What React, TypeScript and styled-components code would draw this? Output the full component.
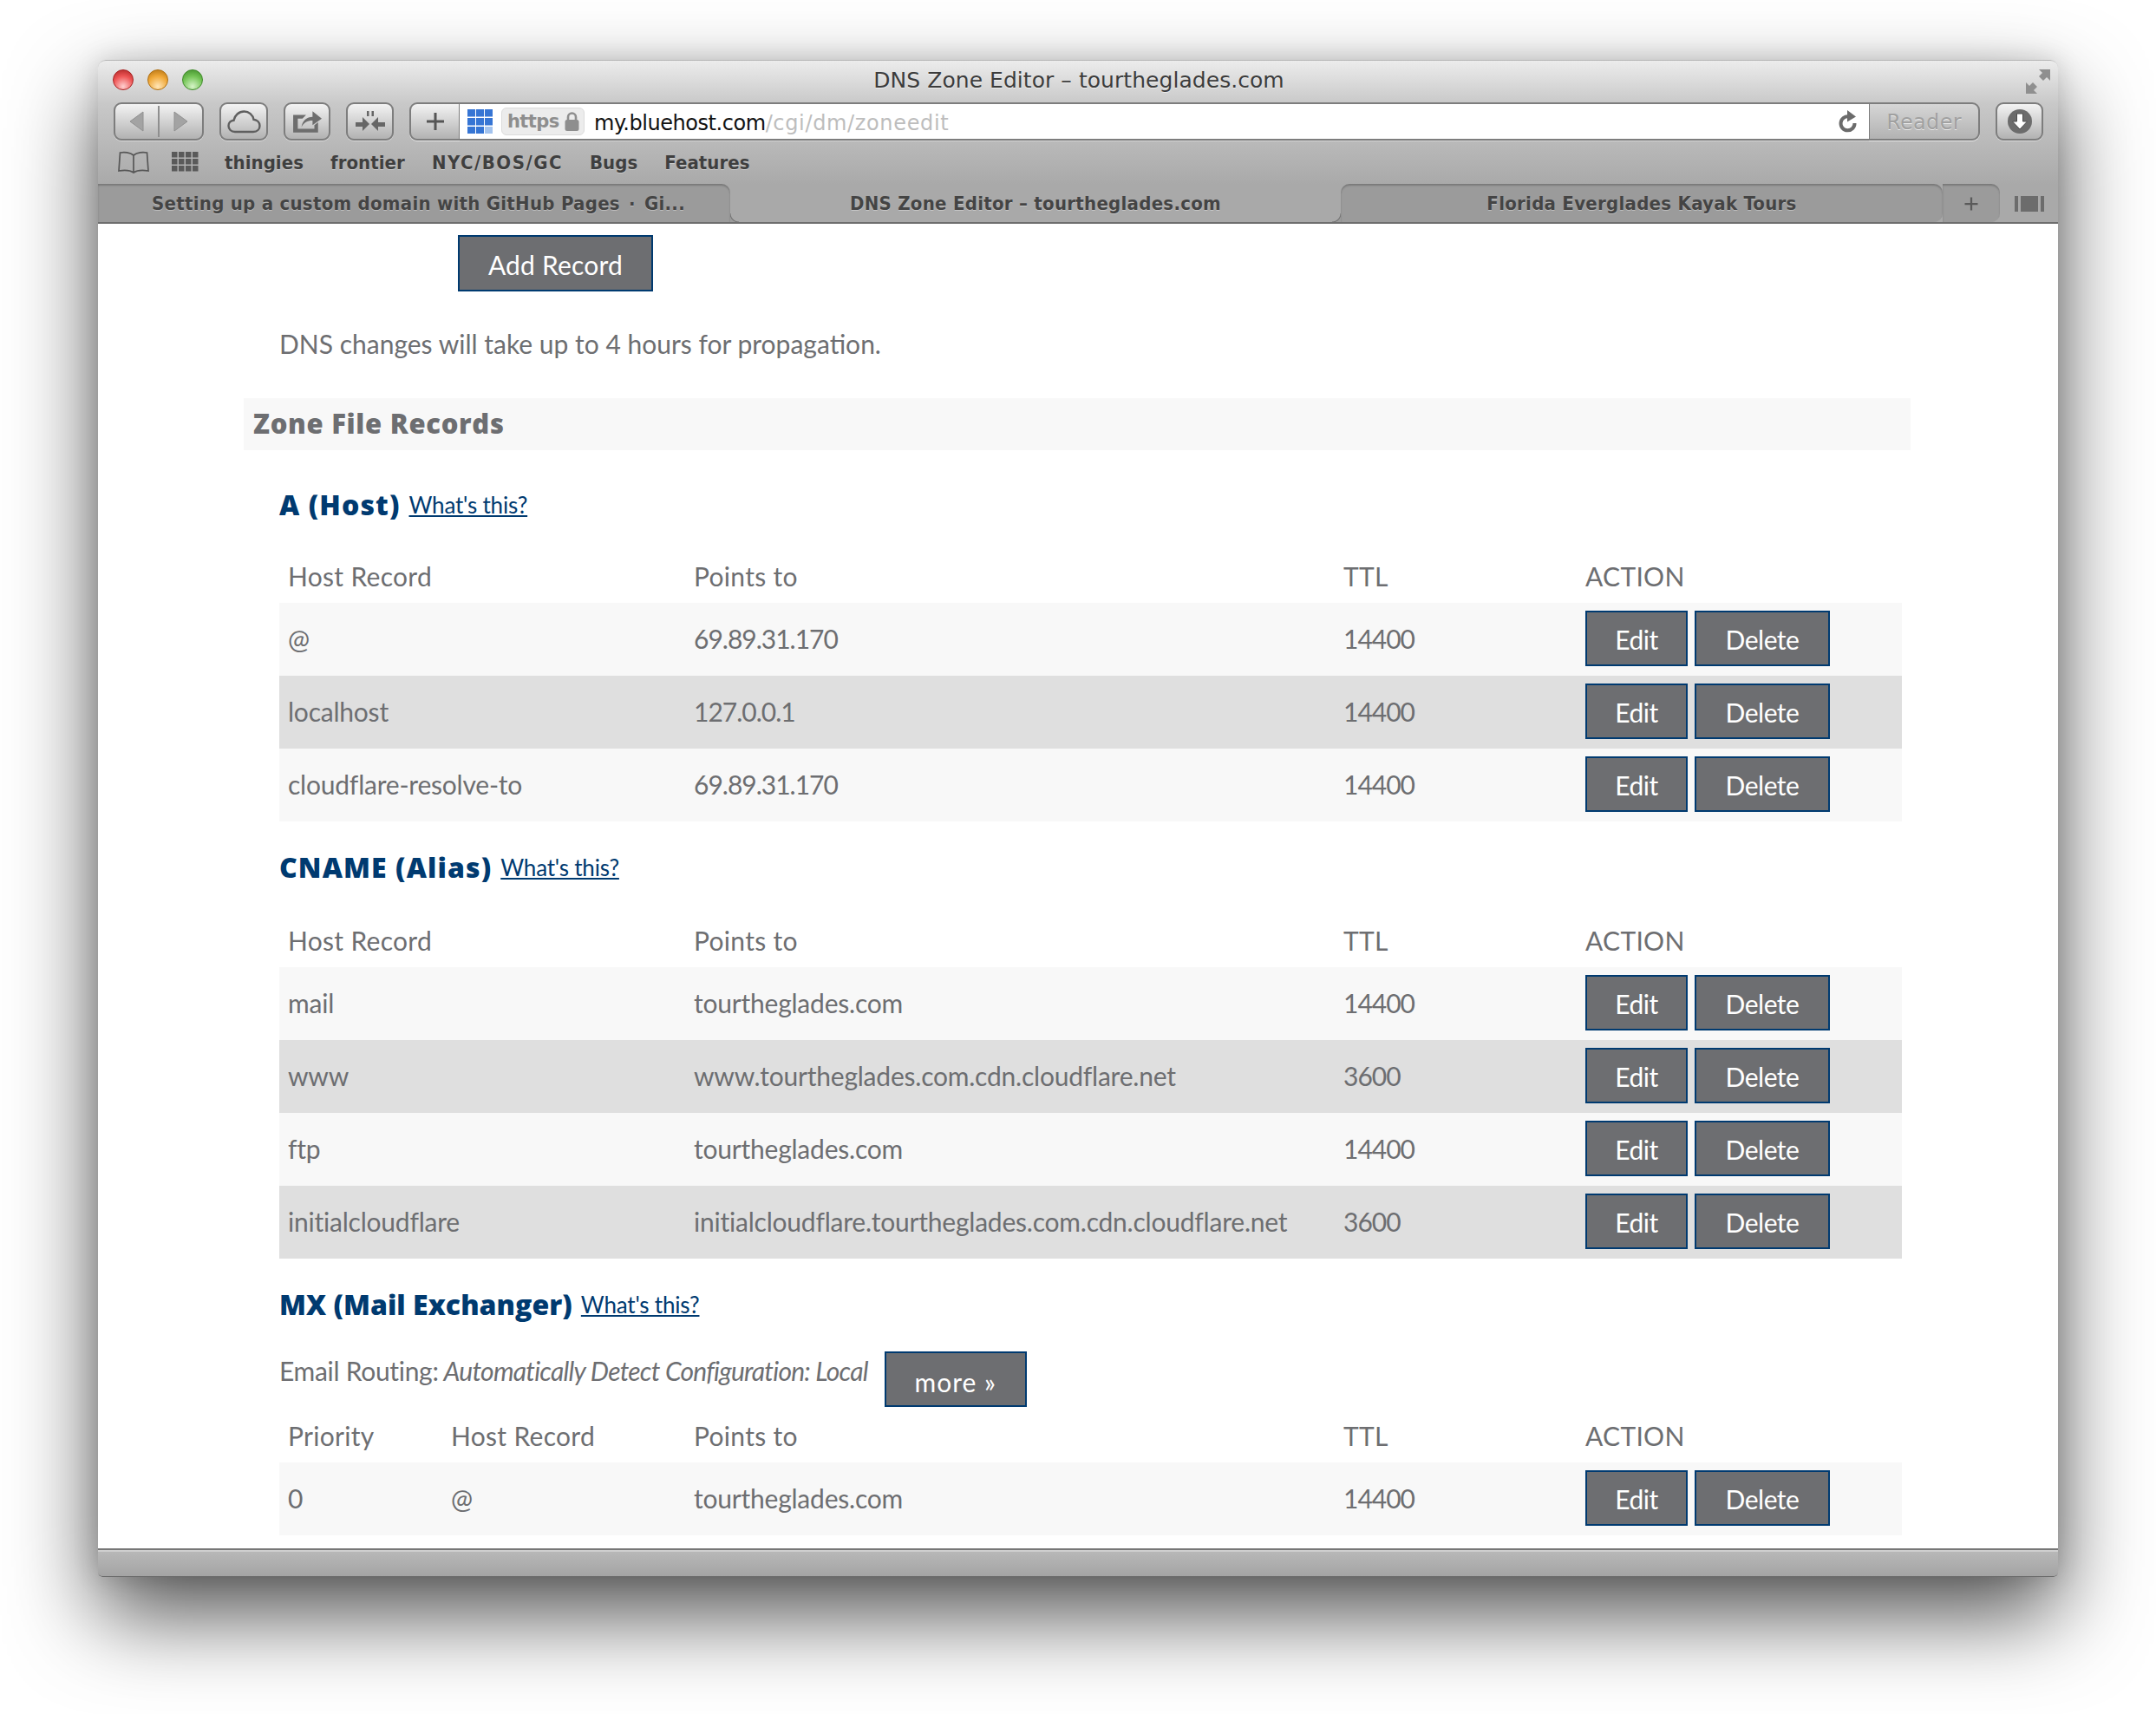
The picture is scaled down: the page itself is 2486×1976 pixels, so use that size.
import React from "react"
import styled, { createGlobalStyle } from "styled-components"

const chromeFont = `"DejaVu Sans", "Liberation Sans", sans-serif`
const pageFont = `Lato, "Open Sans", sans-serif`
const headingFont = `"Open Sans", Lato, sans-serif`
const navy = "#003a70"
const slate = "#6d6e71"

const GlobalStyle = createGlobalStyle`
	html, body {
		margin: 0;
		background: #fff;
	}
	* {
		box-sizing: border-box;
	}
`

const Stage = styled.div`
	width: 2486px;
	height: 1976px;
	padding: 69px 113px 0;
	overflow: hidden;
	background: #fff;
`

const Window = styled.div`
	width: 2260px;
	height: 1749px;
	display: flex;
	flex-direction: column;
	border-radius: 9px 9px 5px 5px;
	box-shadow: 0 44px 100px rgba(0, 0, 0, 0.68), 0 0 30px rgba(0, 0, 0, 0.14);
`

const Chrome = styled.div`
	background: linear-gradient(#ececec 0, #c8c8c8 50px, #b4b4b4 110px, #a9a9a9 143px);
	border-radius: 9px 9px 0 0;
	border-top: 1px solid #b5b5b5;
`

const TitleBar = styled.div`
	height: 48px;
	display: flex;
	align-items: center;
	padding: 0 9px 0 17px;
`

const Lights = styled.div`
	display: flex;
	gap: 16px;
	margin-top: -4px;
`

const Light = styled.span<{ $hue: string; $glow: string; $rim: string }>`
	width: 24px;
	height: 24px;
	border-radius: 50%;
	border: 1px solid ${(p) => p.$rim};
	background: radial-gradient(circle at 50% 85%, ${(p) => p.$glow} 0, ${(p) => p.$hue} 55%, ${(p) => p.$rim} 100%);
`

const Title = styled.div`
	flex: 1;
	text-align: center;
	font: 400 25px ${chromeFont};
	letter-spacing: 0.05px;
	color: #3c3c3c;
	padding-right: 82px;
	margin-top: -3px;
	text-shadow: 0 1px 0 rgba(255, 255, 255, 0.6);
`

const Toolbar = styled.div`
	height: 44px;
	display: flex;
	padding: 0 17px 0 18px;
	gap: 18px;
`

const ToolButton = styled.div<{ $w: number }>`
	width: ${(p) => p.$w}px;
	height: 44px;
	display: flex;
	align-items: center;
	justify-content: center;
	border: 2px solid #7d7d7d;
	border-radius: 9px;
	background: linear-gradient(#f3f3f3, #b2b2b2);
	box-shadow: 0 1px 0 rgba(255, 255, 255, 0.45);
`

const NavSplit = styled.span`
	width: 2px;
	height: 36px;
	margin: 0 16px;
	background: #8f8f8f;
`

const AddressGroup = styled.div`
	flex: 1;
	display: flex;
	height: 44px;
	box-shadow: 0 1px 0 rgba(255, 255, 255, 0.4);
	border-radius: 9px;
`

const AddTab = styled(ToolButton)`
	border-radius: 9px 0 0 9px;
	border-right-width: 1px;
`

const AddressField = styled.div`
	flex: 1;
	display: flex;
	align-items: center;
	padding: 0 14px 0 9px;
	background: #fff;
	border-top: 2px solid #7d7d7d;
	border-bottom: 2px solid #7d7d7d;
`

const Secure = styled.div`
	height: 32px;
	width: 96px;
	margin: 0 11px 0 10px;
	display: flex;
	align-items: center;
	gap: 6px;
	padding-left: 6px;
	font: 700 21px ${chromeFont};
	letter-spacing: -0.6px;
	color: #8e8e8e;
	background: #ececec;
	border: 1px solid #dcdcdc;
	border-radius: 6px;
`

const UrlText = styled.div`
	flex: 1;
	padding-top: 4px;
	font: 400 24px ${chromeFont};
	letter-spacing: -0.45px;
	color: #111;
	white-space: nowrap;
`

const UrlPath = styled.span`
	color: #bdbdbd;
	letter-spacing: 0.65px;
`

const ReaderButton = styled(ToolButton)`
	padding-top: 2px;
	border-radius: 0 9px 9px 0;
	border-left-width: 1px;
	font: 400 24px ${chromeFont};
	letter-spacing: 0.3px;
	color: #a0a0a0;
	background: linear-gradient(#d6d6d6, #b2b2b2);
	text-shadow: 0 1px 0 rgba(255, 255, 255, 0.7);
`

const Bookmarks = styled.div`
	height: 50px;
	display: flex;
	align-items: center;
	padding-left: 23px;
`

const BookmarkIcons = styled.div`
	display: flex;
	align-items: center;
	gap: 26px;
	margin-right: 30px;
`

const BookmarkList = styled.div`
	display: flex;
	gap: 31px;
`

const Bookmark = styled.span<{ $track?: number }>`
	font: 700 22px ${chromeFont};
	font-stretch: condensed;
	letter-spacing: ${(p) => p.$track ?? 0.05}px;
	color: #3f3f3f;
	text-shadow: 0 1px 0 rgba(255, 255, 255, 0.35);
`

const TabBar = styled.div`
	height: 46px;
	display: grid;
	grid-template-columns: 729px 704px 694px 66px 67px;
	background: #a9a9a9;
	border-bottom: 2px solid #6e6e6e;
`

const Tab = styled.div<{ $active?: boolean; $flat?: boolean; $corners?: string; $inset?: number }>`
	position: relative;
	display: flex;
	align-items: center;
	justify-content: center;
	padding: 1px 0 0 ${(p) => p.$inset ?? 0}px;
	font: 700 22px ${chromeFont};
	font-stretch: condensed;
	letter-spacing: 0.27px;
	color: #444;
	text-shadow: 0 1px 0 rgba(255, 255, 255, 0.35);
	white-space: pre;
	border-radius: ${(p) => p.$corners ?? "0"};
	background: ${(p) => (p.$active || p.$flat ? "transparent" : "#9b9b9b")};
	box-shadow: ${(p) => (p.$active || p.$flat ? "none" : "inset 0 2px 2px rgba(0, 0, 0, 0.22)")};
	&::before,
	&::after {
		display: ${(p) => (p.$active ? "block" : "none")};
		content: "";
		position: absolute;
		bottom: 0;
		width: 10px;
		height: 10px;
	}
	&::before {
		left: 0;
		background: radial-gradient(circle at 100% 0, transparent 9px, #6f6f6f 10px, #9b9b9b 11px);
	}
	&::after {
		right: 0;
		background: radial-gradient(circle at 0 0, transparent 9px, #6f6f6f 10px, #9b9b9b 11px);
	}
`

const Viewport = styled.div`
	height: 1528px;
	overflow: hidden;
	background: #fff;
	padding: 13px 0 0 168px;
	font: 400 30px ${pageFont};
	color: ${slate};
`

const PageButton = styled.button<{ $w: number }>`
	width: ${(p) => p.$w}px;
	height: 64px;
	padding: 1px 0 0;
	border: 2px solid ${navy};
	background: ${slate};
	color: #fff;
	font: 400 30px ${pageFont};
	letter-spacing: -0.5px;
`

const AddRecord = styled(PageButton)`
	margin-left: 247px;
	display: block;
	height: 65px;
	padding-top: 3px;
	letter-spacing: 0.2px;
`

const Notice = styled.p`
	margin: 37px 0 0 41px;
	height: 47px;
	line-height: 47px;
`

const ZoneBar = styled.div`
	width: 1922px;
	height: 60px;
	margin-top: 39px;
	padding-left: 11px;
	font: 800 31px/58px ${headingFont};
	letter-spacing: 0.7px;
	background: #f8f8f8;
`

const Section = styled.section<{ $first?: boolean }>`
	margin: ${(p) => (p.$first ? "32px" : "22px")} 0 0 41px;
	width: 1871px;
`

const Heading = styled.div`
	height: 60px;
	display: flex;
	align-items: center;
	gap: 10px;
`

const HeadingText = styled.h2<{ $track: number }>`
	margin: 0;
	font: 800 32px ${headingFont};
	letter-spacing: ${(p) => p.$track}px;
	color: ${navy};
`

const Help = styled.a`
	font-size: 26px;
	color: ${navy};
	text-decoration: underline;
	letter-spacing: -0.2px;
	padding-top: 2px;
`

const Routing = styled.div`
	display: flex;
	gap: 19px;
	margin-top: 25px;
	height: 64px;
`

const RoutingText = styled.div`
	height: 44px;
	line-height: 44px;
	letter-spacing: -0.3px;
	em {
		margin-left: 6px;
		letter-spacing: -0.75px;
	}
`

const MoreButton = styled(PageButton)`
	padding-top: 6px;
	letter-spacing: 1px;
`

const Table = styled.table<{ $top: number }>`
	width: 1871px;
	margin-top: ${(p) => p.$top}px;
	border-collapse: collapse;
	table-layout: fixed;
`

const Col = styled.col<{ $w: number }>`
	width: ${(p) => p.$w}px;
`

const HeadCell = styled.th`
	height: 62px;
	padding: 0 0 0 10px;
	text-align: left;
	font-weight: 400;
	letter-spacing: 0.3px;
`

const Row = styled.tr`
	background: #f8f8f8;
	&:nth-child(even) {
		background: #dfdfdf;
	}
`

const Cell = styled.td<{ $tight?: boolean }>`
	height: 84px;
	padding: 0 0 2px 10px;
	letter-spacing: ${(p) => (p.$tight ? "-1px" : "-0.22px")};
	white-space: nowrap;
`

const Actions = styled.div`
	display: flex;
	gap: 8px;
`

const StatusBar = styled.div`
	height: 33px;
	background: linear-gradient(#b9b9b9, #a4a4a4);
	border-top: 2px solid #777;
	border-bottom: 1px solid #6c6c6c;
	border-radius: 0 0 5px 5px;
	box-shadow: inset 0 2px 0 #cfcfcf;
`

const ExpandIcon = () => (
	<svg width="28" height="28" viewBox="0 0 28 28">
		<path fill="#8f8f8f" d="M15 0H28V13L24 9 20 13 15 8 19 4ZM13 28H0V15L4 19 8 15 13 20 9 24Z" />
	</svg>
)

const BackIcon = ({ flip }: { flip?: boolean }) => (
	<svg width="17" height="24" viewBox="0 0 17 24">
		<path fill="#a3a3a3" stroke="#909090" d={flip ? "M1 1l15 11L1 23z" : "M16 1L1 12l15 11z"} />
	</svg>
)

const CloudIcon = () => (
	<svg width="39" height="27" viewBox="0 0 39 27">
		<path
			fill="none"
			stroke="#5f5f5f"
			strokeWidth="2.4"
			d="M9 25C4.5 25 1.5 22 1.5 18 1.5 14.500 4 12 7.500 11.800 8.500 6 13.500 1.500 19.500 1.500 25 1.500 29.500 5.500 30.500 10.800 34.500 11.300 37.500 14 37.500 18 37.500 22 34.500 25 30 25z"
		/>
	</svg>
)

const ShareIcon = () => (
	<svg width="34" height="28" viewBox="0 0 32 26">
		<path fill="#6d6d6d" d="M1 6h14l-4 4H6v11h18v-4l4-3v11H1z" />
		<path fill="#6d6d6d" d="M10 19c1-7 6-11 12-11V2l10 8-10 7v-5c-6 0-9 2-12 7z" />
	</svg>
)

const CollapseIcon = () => (
	<svg width="34" height="24" viewBox="0 0 34 24">
		<path fill="#666" d="M0 13h8V7l8 8-8 8v-5H0zM34 13h-8V7l-8 8 8 8v-5h8zM13 0h2.500v6H13zM18.500 0H21v6h-2.500z" />
	</svg>
)

const PlusIcon = ({ size = 24, color = "#555" }: { size?: number; color?: string }) => (
	<svg width={size} height={size} viewBox="0 0 24 24">
		<path fill={color} d="M10.500 2h3v8.500H22v3h-8.500V22h-3v-8.500H2v-3h8.500z" />
	</svg>
)

const SitesIcon = () => (
	<svg width="29" height="28" viewBox="0 0 29 28">
		{[0, 1, 2].flatMap((r) =>
			[0, 1, 2].map((c) => (
				<rect
					key={`${r}${c}`}
					x={c * 10}
					y={r * 10}
					width="9"
					height="8.500"
					fill={r === 2 && c === 2 ? "#a3c3ee" : "#3675d4"}
				/>
			)),
		)}
	</svg>
)

const LockIcon = () => (
	<svg width="17" height="24" viewBox="0 0 17 24">
		<path fill="none" stroke="#8e8e8e" strokeWidth="2.600" d="M4 11V7a4.500 4.500 0 0 1 9 0v4" />
		<rect x="0.500" y="10" width="16" height="13" rx="2.500" fill="#8e8e8e" />
	</svg>
)

const ReloadIcon = () => (
	<svg width="22" height="28" viewBox="0 0 22 28">
		<path fill="none" stroke="#6b6b6b" strokeWidth="4" d="M13 8.500A8 8 0 1 0 19.500 16" />
		<path fill="#6b6b6b" d="M11 1l10 7.500-10 6z" />
	</svg>
)

const DownloadIcon = () => (
	<svg width="28" height="28" viewBox="0 0 28 28">
		<circle cx="14" cy="14" r="14" fill="#6c6c6c" />
		<path fill="#fff" stroke="#4d4d4d" d="M10.500 5h7v9h5L14 23l-8.500-9h5z" />
	</svg>
)

const BookIcon = () => (
	<svg width="36" height="26" viewBox="0 0 36 26">
		<path
			fill="none"
			stroke="#575757"
			strokeWidth="1.700"
			d="M18 5C14 1.500 7 1 2.500 2L1 23c6-1 13-.8 17 2 4-2.800 11-3 17-2L33.500 2C29 1 22 1.500 18 5zv20"
		/>
	</svg>
)

const TopSitesIcon = () => (
	<svg width="31" height="24" viewBox="0 0 31 24">
		{[0, 1, 2].flatMap((r) =>
			[0, 1, 2, 3].map((c) => (
				<rect key={`${r}${c}`} x={c * 8} y={r * 8} width="6.500" height="6.500" fill="#5a5a5a" />
			)),
		)}
	</svg>
)

const SidebarIcon = () => (
	<svg width="34" height="18" viewBox="0 0 34 18">
		<path fill="#6c6c6c" d="M0 0h4v18H0zM7 0h20v18H7zM30 0h4v18h-4z" />
	</svg>
)

type DnsRecord = { cells: string[] }

const isNumeric = (text: string) => /^[\d.]+$/.test(text)

const RecordRows = ({ rows }: { rows: DnsRecord[] }) => (
	<tbody>
		{rows.map((row) => (
			<Row key={row.cells.join()}>
				{row.cells.map((cell, i) => (
					<Cell key={i} $tight={isNumeric(cell)}>
						{cell}
					</Cell>
				))}
				<Cell>
					<Actions>
						<PageButton $w={118}>Edit</PageButton>
						<PageButton $w={156}>Delete</PageButton>
					</Actions>
				</Cell>
			</Row>
		))}
	</tbody>
)

const Columns = ({ widths }: { widths: number[] }) => (
	<colgroup>
		{widths.map((w, i) => (
			<Col key={i} $w={w} />
		))}
	</colgroup>
)

const Head = ({ labels }: { labels: string[] }) => (
	<thead>
		<tr>
			{labels.map((label) => (
				<HeadCell key={label}>{label}</HeadCell>
			))}
		</tr>
	</thead>
)

const SectionTitle = ({ children, track }: { children: string; track: number }) => (
	<Heading>
		<HeadingText $track={track}>{children}</HeadingText>
		<Help href="#">What's this?</Help>
	</Heading>
)

const hostRows: DnsRecord[] = [
	{ cells: ["@", "69.89.31.170", "14400"] },
	{ cells: ["localhost", "127.0.0.1", "14400"] },
	{ cells: ["cloudflare-resolve-to", "69.89.31.170", "14400"] },
]

const aliasRows: DnsRecord[] = [
	{ cells: ["mail", "tourtheglades.com", "14400"] },
	{ cells: ["www", "www.tourtheglades.com.cdn.cloudflare.net", "3600"] },
	{ cells: ["ftp", "tourtheglades.com", "14400"] },
	{ cells: ["initialcloudflare", "initialcloudflare.tourtheglades.com.cdn.cloudflare.net", "3600"] },
]

const mailRows: DnsRecord[] = [{ cells: ["0", "@", "tourtheglades.com", "14400"] }]

const App: React.FC = () => (
	<Stage>
		<GlobalStyle />
		<Window>
			<Chrome>
				<TitleBar>
					<Lights>
						<Light $hue="#ee5555" $glow="#ffd0d0" $rim="#a82222" />
						<Light $hue="#f0a838" $glow="#ffe6b8" $rim="#b06f10" />
						<Light $hue="#74c456" $glow="#d6f4c8" $rim="#3e8a28" />
					</Lights>
					<Title>DNS Zone Editor – tourtheglades.com</Title>
					<ExpandIcon />
				</TitleBar>
				<Toolbar>
					<ToolButton $w={104}>
						<BackIcon />
						<NavSplit />
						<BackIcon flip />
					</ToolButton>
					<ToolButton $w={56}>
						<CloudIcon />
					</ToolButton>
					<ToolButton $w={54}>
						<ShareIcon />
					</ToolButton>
					<ToolButton $w={55}>
						<CollapseIcon />
					</ToolButton>
					<AddressGroup>
						<AddTab $w={58}>
							<PlusIcon />
						</AddTab>
						<AddressField>
							<SitesIcon />
							<Secure>
								https
								<LockIcon />
							</Secure>
							<UrlText>
								my.bluehost.com<UrlPath>/cgi/dm/zoneedit</UrlPath>
							</UrlText>
							<ReloadIcon />
						</AddressField>
						<ReaderButton $w={128}>Reader</ReaderButton>
					</AddressGroup>
					<ToolButton $w={55}>
						<DownloadIcon />
					</ToolButton>
				</Toolbar>
				<Bookmarks>
					<BookmarkIcons>
						<BookIcon />
						<TopSitesIcon />
					</BookmarkIcons>
					<BookmarkList>
						<Bookmark>thingies</Bookmark>
						<Bookmark>frontier</Bookmark>
						<Bookmark $track={1.5}>NYC/BOS/GC</Bookmark>
						<Bookmark>Bugs</Bookmark>
						<Bookmark>Features</Bookmark>
					</BookmarkList>
				</Bookmarks>
				<TabBar>
					<Tab $corners="0 10px 0 0" $inset={10}>
						Setting up a custom domain with GitHub Pages{"\u2002·\u2002"}Gi...
					</Tab>
					<Tab $active>DNS Zone Editor – tourtheglades.com</Tab>
					<Tab $corners="10px 10px 10px 0">Florida Everglades Kayak Tours</Tab>
					<Tab $corners="0 10px 10px 0">
						<PlusIcon size={18} color="#5a5a5a" />
					</Tab>
					<Tab $flat>
						<SidebarIcon />
					</Tab>
				</TabBar>
			</Chrome>
			<Viewport>
				<AddRecord $w={225}>Add Record</AddRecord>
				<Notice>DNS changes will take up to 4 hours for propagation.</Notice>
				<ZoneBar>Zone File Records</ZoneBar>
				<Section $first>
					<SectionTitle track={1.1}>A (Host)</SectionTitle>
					<Table $top={22}>
						<Columns widths={[468, 749, 279, 375]} />
						<Head labels={["Host Record", "Points to", "TTL", "ACTION"]} />
						<RecordRows rows={hostRows} />
					</Table>
				</Section>
				<Section>
					<SectionTitle track={1.1}>CNAME (Alias)</SectionTitle>
					<Table $top={24}>
						<Columns widths={[468, 749, 279, 375]} />
						<Head labels={["Host Record", "Points to", "TTL", "ACTION"]} />
						<RecordRows rows={aliasRows} />
					</Table>
				</Section>
				<Section>
					<SectionTitle track={0.03}>MX (Mail Exchanger)</SectionTitle>
					<Routing>
						<RoutingText>
							Email Routing:<em>Automatically Detect Configuration: Local</em>
						</RoutingText>
						<MoreButton $w={164}>more »</MoreButton>
					</Routing>
					<Table $top={2}>
						<Columns widths={[188, 280, 749, 279, 375]} />
						<Head labels={["Priority", "Host Record", "Points to", "TTL", "ACTION"]} />
						<RecordRows rows={mailRows} />
					</Table>
				</Section>
			</Viewport>
			<StatusBar />
		</Window>
	</Stage>
)

export default App
